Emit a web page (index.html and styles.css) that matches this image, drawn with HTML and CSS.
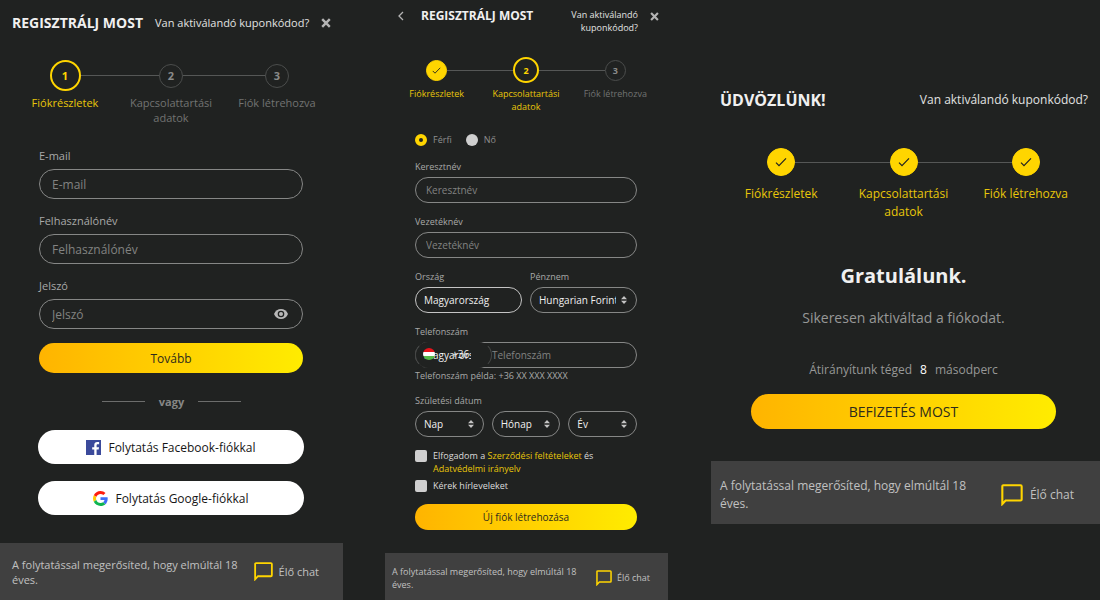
FILE: index.html
```html
<!DOCTYPE html>
<html lang="hu">
<head>
<meta charset="utf-8">
<title>Regisztráció</title>
<link rel="stylesheet" href="styles.css">
</head>
<body>
<svg class="defs" aria-hidden="true">
  <symbol id="check" viewBox="0 0 12 12"><path d="M1 6.6 4 9.6 11 2.4" fill="none" stroke="#202221" stroke-width="1.2"/></symbol>
  <symbol id="close" viewBox="0 0 10 10"><path d="M1.2 1.2 8.8 8.8M8.8 1.2 1.2 8.8" fill="none" stroke="#b4b4b4" stroke-width="2.4"/></symbol>
  <symbol id="chat" viewBox="0 0 20 20"><path d="M1.2 18.2V2.2Q1.2 1.2 2.2 1.2H17.8Q18.8 1.2 18.8 2.2V14Q18.8 15 17.8 15H4.2Z" fill="none" stroke="#ffd500" stroke-width="1.9"/></symbol>
</svg>
<main class="board">

  <section class="panel panel-account">
    <header class="head">
      <h2 class="title">REGISZTRÁLJ MOST</h2>
      <a class="coupon" href="#">Van aktiválandó kuponkódod?</a>
      <button class="icon-btn" type="button" aria-label="Bezárás"><svg class="close"><use href="#close"/></svg></button>
    </header>
    <ol class="steps">
      <li class="step active"><span class="mark"><b class="dot">1</b></span><span class="name">Fiókrészletek</span></li>
      <li class="step"><span class="mark"><b class="dot">2</b></span><span class="name">Kapcsolattartási adatok</span></li>
      <li class="step"><span class="mark"><b class="dot">3</b></span><span class="name">Fiók létrehozva</span></li>
    </ol>
    <form class="form">
      <div class="field"><label for="email">E-mail</label><input class="box" id="email" type="email" placeholder="E-mail"></div>
      <div class="field"><label for="user">Felhasználónév</label><input class="box" id="user" type="text" placeholder="Felhasználónév"></div>
      <div class="field"><label for="pass">Jelszó</label>
        <div class="box with-icon"><input class="bare" id="pass" type="password" placeholder="Jelszó">
          <button class="icon-btn" type="button" aria-label="Jelszó mutatása"><svg class="eye" viewBox="0 0 14 10"><path d="M0 5C1.3 1.8 4 0 7 0s5.7 1.8 7 5c-1.3 3.2-4 5-7 5S1.300 8.200 0 5Z" fill="#b8b8b8"/><circle cx="7" cy="5" r="3.300" fill="#202221"/><circle cx="7" cy="5" r="2" fill="#b8b8b8"/></svg></button>
        </div>
      </div>
      <button class="cta" type="button">Tovább</button>
    </form>
    <div class="or"><span>vagy</span></div>
    <div class="social">
      <button class="social-btn" type="button"><svg class="brand" viewBox="0 0 16 16"><rect width="16" height="16" fill="#3b4a9b"/><path d="M8.800 16V10H6.600V7.600H8.800V5.600C8.800 3.400 10 2.200 12 2.200H14V4.500H12.600C11.600 4.500 11.300 5 11.300 5.800V7.600H13.900L13.500 10H11.300V16Z" fill="#fff"/></svg>Folytatás Facebook-fiókkal</button>
      <button class="social-btn" type="button"><svg class="brand" viewBox="0 0 48 48"><path fill="#ff1d0d" d="M24 9.500c3.540 0 6.710 1.220 9.210 3.600l6.850-6.850C35.900 2.380 30.470 0 24 0 14.620 0 6.510 5.380 2.560 13.220l7.980 6.190C12.430 13.720 17.740 9.500 24 9.500z"/><path fill="#3f6df5" d="M46.980 24.550c0-1.570-.15-3.090-.38-4.550H24v9.020h12.940c-.58 2.960-2.260 5.480-4.780 7.180l7.730 6c4.510-4.180 7.090-10.360 7.090-17.650z"/><path fill="#ffca05" d="M10.530 28.590c-.48-1.450-.76-2.990-.76-4.590s.27-3.140.76-4.590l-7.980-6.190C.92 16.460 0 20.120 0 24c0 3.880.92 7.540 2.560 10.780l7.970-6.190z"/><path fill="#0fb550" d="M24 48c6.480 0 11.930-2.130 15.890-5.810l-7.730-6c-2.150 1.450-4.920 2.300-8.160 2.300-6.260 0-11.570-4.220-13.470-9.910l-7.980 6.190C6.510 42.620 14.620 48 24 48z"/></svg>Folytatás Google-fiókkal</button>
    </div>
    <footer class="foot">
      <p>A folytatással megerősíted, hogy elmúltál 18 éves.</p>
      <a class="chat" href="#"><svg><use href="#chat"/></svg>Élő chat</a>
    </footer>
  </section>

  <section class="panel panel-contact">
    <header class="head">
      <button class="icon-btn" type="button" aria-label="Vissza"><svg class="back" viewBox="0 0 6 10"><path d="M5 1 1 5 5 9" fill="none" stroke="#b4b4b4" stroke-width="1.300"/></svg></button>
      <h2 class="title">REGISZTRÁLJ MOST</h2>
      <a class="coupon" href="#">Van aktiválandó kuponkódod?</a>
      <button class="icon-btn" type="button" aria-label="Bezárás"><svg class="close"><use href="#close"/></svg></button>
    </header>
    <ol class="steps">
      <li class="step done"><span class="mark"><b class="dot"><svg><use href="#check"/></svg></b></span><span class="name">Fiókrészletek</span></li>
      <li class="step active"><span class="mark"><b class="dot">2</b></span><span class="name">Kapcsolattartási adatok</span></li>
      <li class="step"><span class="mark"><b class="dot">3</b></span><span class="name">Fiók létrehozva</span></li>
    </ol>
    <form class="form">
      <div class="radios">
        <label><input type="radio" name="sex" checked>Férfi</label>
        <label><input type="radio" name="sex">Nő</label>
      </div>
      <div class="field"><label for="first">Keresztnév</label><input class="box" id="first" type="text" placeholder="Keresztnév"></div>
      <div class="field"><label for="last">Vezetéknév</label><input class="box" id="last" type="text" placeholder="Vezetéknév"></div>
      <div class="pair">
        <div class="field"><label for="country">Ország</label><select class="box bright" id="country"><option>Magyarország</option></select></div>
        <div class="field"><label for="currency">Pénznem</label><select class="box arrows" id="currency"><option>Hungarian Forint</option></select></div>
      </div>
      <div class="field"><label for="phone">Telefonszám</label>
        <div class="phone">
          <input class="box" id="phone" type="tel" placeholder="Telefonszám">
          <div class="prefix">
            <select class="box" aria-label="Országkód"><option>Magyarország</option></select>
            <svg class="flag" viewBox="0 0 12 12" aria-hidden="true"><clipPath id="round"><circle cx="6" cy="6" r="6"/></clipPath><g clip-path="url(#round)"><path d="M0 0H12V4H0Z" fill="#e8131b"/><path d="M0 4H12V8H0Z" fill="#fff"/><path d="M0 8H12V12H0Z" fill="#55b948"/></g></svg>
            <span class="code">+36</span>
          </div>
        </div>
        <p class="hint">Telefonszám példa: +36 XX XXX XXXX</p>
      </div>
      <fieldset class="field birth">
        <legend>Születési dátum</legend>
        <div class="trio">
          <select class="box arrows" aria-label="Nap"><option>Nap</option></select>
          <select class="box arrows" aria-label="Hónap"><option>Hónap</option></select>
          <select class="box arrows" aria-label="Év"><option>Év</option></select>
        </div>
      </fieldset>
      <div class="checks">
        <div class="check"><input type="checkbox" id="terms"><label for="terms">Elfogadom a <a href="#">Szerződési feltételeket</a> és <a href="#">Adatvédelmi irányelv</a></label></div>
        <div class="check"><input type="checkbox" id="news"><label for="news">Kérek hírleveleket</label></div>
      </div>
      <button class="cta" type="button">Új fiók létrehozása</button>
    </form>
    <footer class="foot">
      <p>A folytatással megerősíted, hogy elmúltál 18 éves.</p>
      <a class="chat" href="#"><svg><use href="#chat"/></svg>Élő chat</a>
    </footer>
  </section>

  <section class="panel panel-done">
    <header class="head">
      <h2 class="title">ÜDVÖZLÜNK!</h2>
      <a class="coupon" href="#">Van aktiválandó kuponkódod?</a>
    </header>
    <ol class="steps">
      <li class="step done"><span class="mark"><b class="dot"><svg><use href="#check"/></svg></b></span><span class="name">Fiókrészletek</span></li>
      <li class="step done"><span class="mark"><b class="dot"><svg><use href="#check"/></svg></b></span><span class="name">Kapcsolattartási adatok</span></li>
      <li class="step done"><span class="mark"><b class="dot"><svg><use href="#check"/></svg></b></span><span class="name">Fiók létrehozva</span></li>
    </ol>
    <div class="result">
      <h3>Gratulálunk.</h3>
      <p class="lead">Sikeresen aktiváltad a fiókodat.</p>
      <p class="timer"><span>Átirányítunk téged</span><b>8</b><span>másodperc</span></p>
      <button class="cta" type="button">BEFIZETÉS MOST</button>
    </div>
    <footer class="foot">
      <p>A folytatással megerősíted, hogy elmúltál 18 éves.</p>
      <a class="chat" href="#"><svg><use href="#chat"/></svg>Élő chat</a>
    </footer>
  </section>

</main>
</body>
</html>
```
FILE: styles.css
```css
* { box-sizing: border-box; margin: 0; padding: 0; }
body { background: #202221; color: #b4b4b4; font-family: "Open Sans", "Noto Sans", sans-serif; }
a { color: inherit; text-decoration: none; }
svg { display: block; }
.defs { display: none; }
button, input, select { font: inherit; color: inherit; min-width: 0; }
button { border: 0; background: none; cursor: pointer; }

.board { display: grid; grid-template-columns: 343fr 42fr 283fr 43fr 389fr; min-height: 100vh; }
.panel { display: flex; flex-direction: column; min-width: 0; font-size: var(--text); line-height: var(--line); }
.panel-account { --text: 11px; --line: 15px; --small: 24px; --big: 31px; --ring: 2px; --box: 30px; --radius: 15px; --control: 12px; --gap: 14px; --inset: 12px; --icon: 10px; grid-column: 1; }
.panel-contact { --text: 9px; --line: 13px; --small: 21px; --big: 26px; --ring: 2px; --box: 26px; --radius: 13px; --control: 10px; --gap: 12px; --inset: 10px; --icon: 9px; grid-column: 3; }
.panel-done { --text: 12px; --line: 18px; --small: 28px; --big: 35px; --ring: 2px; --box: 35px; --radius: 18px; --control: 14px; --gap: 18px; --inset: 14px; --icon: 12px; grid-column: 5; }

.head { display: flex; align-items: center; }
.title { flex: 1; color: #f0f0f0; font-weight: 700; white-space: nowrap; }
.coupon { color: #e2e2e2; }
.icon-btn { flex: none; }
.close { width: var(--icon); height: var(--icon); }
.panel-account .head { padding: 0 14px 0 12px; height: 45px; gap: 12px; }
.panel-account .title { font-size: 14px; }
.panel-account .coupon { white-space: nowrap; }
.panel-contact .head { padding: 8px 9px 0 13px; gap: 12px; align-items: flex-start; }
.panel-contact .title { font-size: 12px; line-height: 16px; }
.panel-contact .coupon { width: 72px; text-align: right; }
.panel-contact .icon-btn { padding: 4px 0; }
.panel-contact .head .icon-btn:first-child { margin-right: 5px; padding: 3px 0; }
.back { width: 6px; height: 10px; }
.panel-done .head { padding: 91px 12px 0 9px; }
.panel-done .title { font-size: 16px; }

.steps { display: grid; grid-template-columns: repeat(3, 1fr); list-style: none; }
.step { text-align: center; color: #727372; }
.mark { display: flex; align-items: center; height: var(--big); }
.mark::before, .mark::after { content: ""; flex: 1; height: 1px; background: #555756; }
.step:first-child .mark::before, .step:last-child .mark::after { background: none; }
.dot { display: flex; align-items: center; justify-content: center; width: var(--small); height: var(--small); border: 1px solid #4b4d4c; border-radius: 50%; color: #8a8b8a; font-size: var(--text); }
.active .dot { width: var(--big); height: var(--big); border: var(--ring) solid #ffd500; color: #ffd500; }
.done .dot { background: #ffd500; border-color: #ffd500; }
.dot svg { width: var(--icon); height: var(--icon); }
.active, .done { color: #e8c60a; }
.name { display: block; margin: 4px auto 0; width: 86%; }
.panel-account .steps { padding: 15px 13px 0 12px; }
.panel-contact .steps { padding: 23px 8px 0 7px; }
.panel-done .steps { padding: 35px 13px 0 9px; }
.panel-done .mark { height: 36px; }
.panel-done .name { margin-top: 5px; }

.form { display: flex; flex-direction: column; gap: var(--gap); }
.panel-account .form { padding: 23px 40px 0 39px; }
.panel-contact .form { padding: 20px 31px 0 30px; }
.field { display: flex; flex-direction: column; gap: 4px; border: 0; min-width: 0; color: #a8a9a8; }
.panel-account .field { gap: 6px; }
.box { width: 100%; height: var(--box); padding: 0 var(--inset); border: 1px solid #868786; border-radius: var(--radius); background: #202221; font-size: var(--control); outline: 0; }
::placeholder { color: #828382; opacity: 1; }
.with-icon { display: flex; align-items: center; padding-right: 14px; }
.bare { flex: 1; border: 0; outline: 0; background: none; font-size: var(--control); }
.eye { width: 14px; height: 10px; }
select.box { appearance: none; color: #f0f0f0; padding: 0 8px; }
.bright { border-color: #c4c4c4; }
.arrows { background: #202221 url("data:image/svg+xml,%3Csvg xmlns='http://www.w3.org/2000/svg' width='6' height='8'%3E%3Cpath d='M0 3.300 3 0 6 3.300ZM0 4.700 3 8 6 4.700Z' fill='%23c4c4c4'/%3E%3C/svg%3E") no-repeat right 9px center; }
.arrows.box { padding-right: 20px; }
.pair { display: grid; grid-template-columns: 1fr 1fr; gap: 8px; }
.trio { display: grid; grid-template-columns: repeat(3, 1fr); gap: 8px; }
.birth legend { margin-bottom: 4px; }

.radios { display: flex; gap: 14px; color: #8f908f; margin-bottom: 2px; }
.radios label { display: flex; align-items: center; gap: 6px; }
.radios input { appearance: none; width: 12px; height: 12px; border-radius: 50%; background: #cfcfcf; }
.radios input:checked { background: #202221; border: 4px solid #ffd500; }

.phone { position: relative; }
.phone > .box { padding-left: 76px; }
.prefix { position: absolute; inset: 0 auto 0 0; width: 77px; }
.prefix .box { border-color: #444645; border-top-color: #202221; border-bottom-color: #202221; padding-right: 20px; }
.flag { position: absolute; left: 8px; top: 6px; width: 12px; height: 12px; }
.code { position: absolute; left: 37px; top: 6px; color: #f0f0f0; font-size: var(--control); }
.hint { margin-top: -3px; }

.checks { display: flex; flex-direction: column; gap: 4px; color: #dcdcdc; }
.check { display: flex; gap: 6px; }
.check a { color: #e8c60a; }
.check input { appearance: none; flex: none; width: 12px; height: 12px; margin-top: 1px; border-radius: 2px; background: #cfcfcf; }

.cta { width: 100%; height: var(--box); border-radius: var(--radius); background: linear-gradient(90deg, #ffb400, #ffec00); color: #2d2b1c; font-size: var(--control); }

.or { display: flex; align-items: center; justify-content: center; gap: 14px; margin: 21px 0; color: #868786; font-weight: 700; }
.or::before, .or::after { content: ""; width: 43px; height: 1px; background: #6c6d6c; }
.social { display: flex; flex-direction: column; gap: 17px; padding: 0 39px 0 38px; }
.social-btn { display: flex; align-items: center; justify-content: center; gap: 7px; height: 34px; border-radius: 17px; background: #fff; color: #161616; font-size: 12px; }
.brand { width: 15px; height: 15px; }

.result { display: flex; flex-direction: column; align-items: center; padding: 41px 44px 0 40px; text-align: center; }
.result h3 { color: #f0f0f0; font-size: 20px; line-height: 28px; }
.lead { margin-top: 18px; font-size: 14px; line-height: 20px; color: #979897; }
.timer { display: flex; gap: 8px; margin: 33px 0 15px; color: #979897; }
.timer b { color: #fff; font-weight: 400; }

.foot { display: flex; align-items: center; background: #404040; color: #c0c0c0; }
.foot p { flex: 1; }
.chat { display: flex; align-items: center; flex: none; }
.panel-account .foot { margin-top: 28px; flex: 1; padding: 0 24px 0 12px; }
.panel-account .foot p { padding-right: 12px; }
.panel-account .chat { gap: 6px; }
.panel-account .chat svg { width: 19px; height: 19px; }
.panel-contact .foot { margin-top: 23px; flex: 1; padding: 2px 18px 0 7px; }
.panel-contact .foot p { padding-right: 16px; }
.panel-contact .chat { gap: 5px; }
.panel-contact .chat svg { width: 16px; height: 16px; }
.panel-done .foot { margin-top: 32px; height: 63px; padding: 4px 26px 0 9px; }
.panel-done .foot p { padding-right: 24px; }
.panel-done .chat { gap: 7px; }
.panel-done .chat svg { width: 22px; height: 22px; }
```
